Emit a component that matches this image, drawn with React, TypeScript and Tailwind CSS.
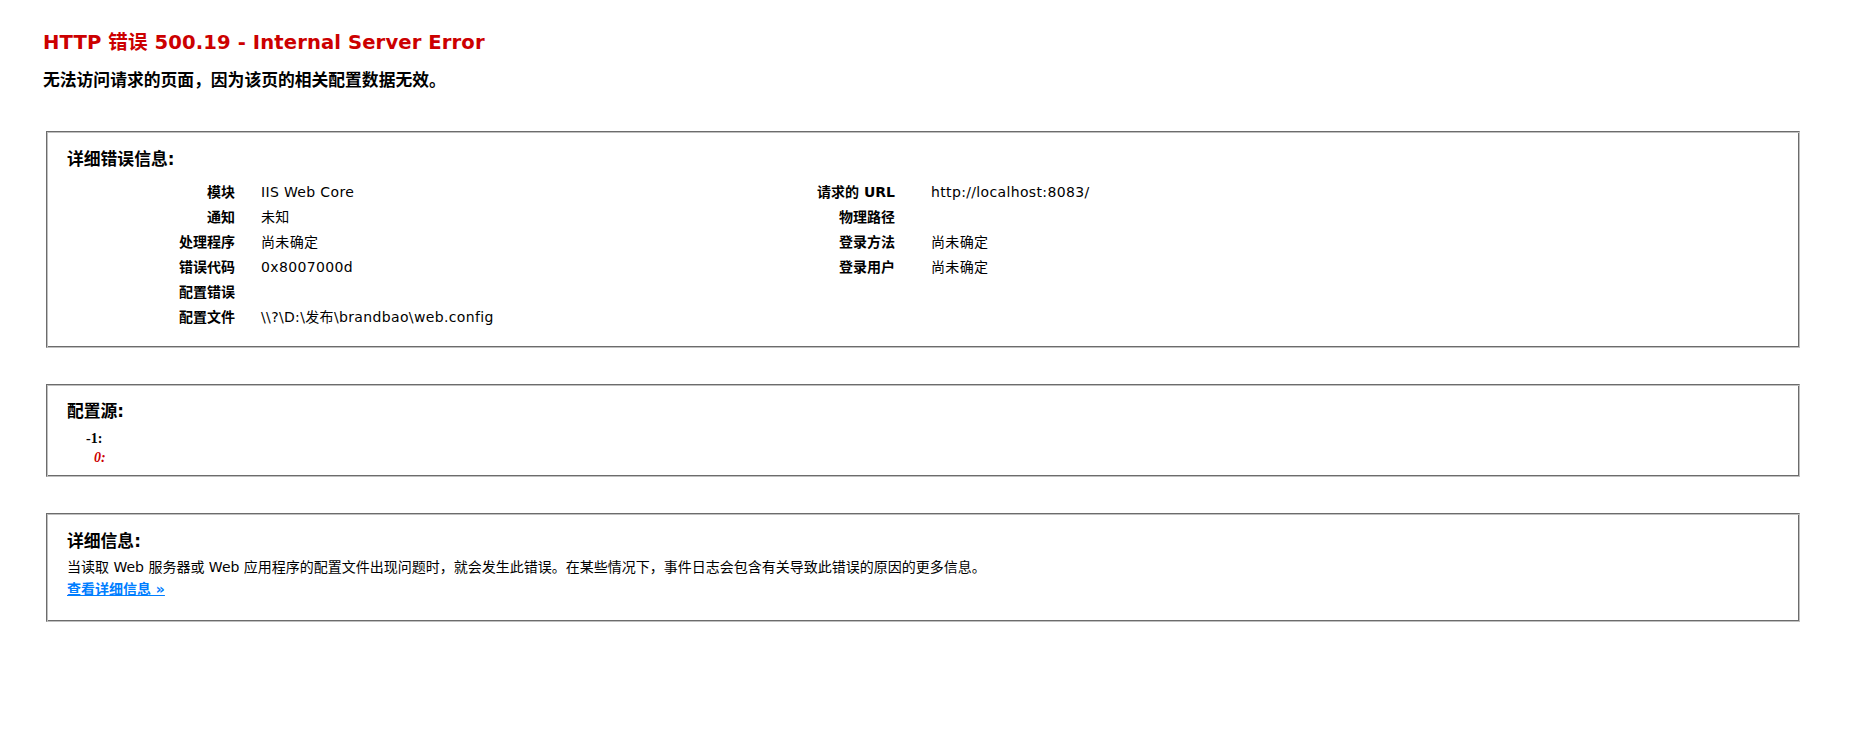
import React from 'react';

const leftRows: [string, string][] = [
  ['模块', 'IIS Web Core'],
  ['通知', '未知'],
  ['处理程序', '尚未确定'],
  ['错误代码', '0x8007000d'],
  ['配置错误', ''],
  ['配置文件', '\\\\?\\D:\\发布\\brandbao\\web.config'],
];

const rightRows: [string, string][] = [
  ['请求的 URL', 'http://localhost:8083/'],
  ['物理路径', ''],
  ['登录方法', '尚未确定'],
  ['登录用户', '尚未确定'],
];

// fieldset-like groove border: 1px border + 1px inset shadow
const box =
  'ml-[46px] w-[1754px] border border-t-[#6c6c6c] border-l-[#6c6c6c] border-r-[#c0c0c0] border-b-[#c0c0c0] shadow-[inset_1px_1px_0_#c0c0c0,inset_-1px_-1px_0_#6c6c6c] pl-[20px]';

function Legend({ children }: { children: React.ReactNode }) {
  return <h4 className="text-[16.8px] font-bold leading-[20px] text-black">{children}</h4>;
}

function DetailTable({
  rows,
  thWidth,
  gap,
}: {
  rows: [string, string][];
  thWidth: string;
  gap: string;
}) {
  return (
    <div>
      {rows.map(([k, v]) => (
        <div key={k} className="flex h-[25px] pt-[3px] text-[14px] leading-[19px]">
          <div className={`${thWidth} shrink-0 text-right font-bold text-black`}>{k}</div>
          <div className={`${gap} whitespace-nowrap tracking-[0.35px] text-black`}>{v}</div>
        </div>
      ))}
    </div>
  );
}

export default function App() {
  return (
    <div className="min-h-screen bg-white pt-[31px] font-['Verdana','DejaVu_Sans','Noto_Sans_CJK_SC',sans-serif]">
      <div className="pl-[43px]">
        <h3 className="text-[19.6px] font-bold leading-[24px] tracking-[0.1px] text-[#cc0000]">
          HTTP 错误 500.19 - Internal Server Error
        </h3>
        <h4 className="mt-[15px] text-[16.8px] font-bold leading-[20px] text-black">
          无法访问请求的页面，因为该页的相关配置数据无效。
        </h4>
      </div>

      <section className={`${box} mt-[41px] pt-[17px] pb-[17px]`}>
        <Legend>详细错误信息:</Legend>
        <div className="mt-[11px] flex">
          <div className="w-[600px] shrink-0">
            <DetailTable rows={leftRows} thWidth="w-[168px]" gap="pl-[26px]" />
          </div>
          <div className="flex-1">
            <DetailTable rows={rightRows} thWidth="w-[228px]" gap="pl-[36px]" />
          </div>
        </div>
      </section>

      <section className={`${box} mt-[36px] pt-[16px] pb-[9px]`}>
        <Legend>配置源:</Legend>
        <div className="mt-[8px] font-['Liberation_Serif',serif] text-[14px] font-bold leading-[19px]">
          <div className="pl-[19px] text-black">-1:</div>
          <div className="pl-[27px] italic text-[#cc0000]">0:</div>
        </div>
      </section>

      <section className={`${box} mt-[36px] pt-[17px] pb-[20px]`}>
        <Legend>详细信息:</Legend>
        <p className="mt-[7px] text-[14px] leading-[19px] text-black">
          当读取 Web 服务器或 Web 应用程序的配置文件出现问题时，就会发生此错误。在某些情况下，事件日志会包含有关导致此错误的原因的更多信息。
        </p>
        <a href="#" className="text-[14px] font-bold leading-[19px] text-[#007eff] underline hover:no-underline">
          查看详细信息 »
        </a>
      </section>
    </div>
  );
}
